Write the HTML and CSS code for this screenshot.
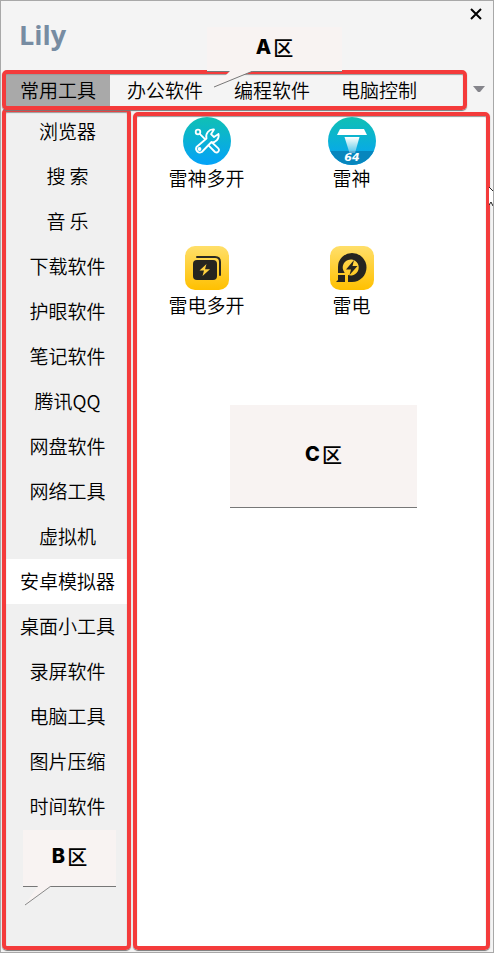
FILE: index.html
```
<!DOCTYPE html>
<html lang="zh-CN">
<head>
    <meta charset="UTF-8">
    <meta name="viewport" content="width=device-width, initial-scale=1.0">
    <title>Lily</title>
    <link rel="stylesheet" href="styles.css">
</head>
<body>
    <div class="window">
        <header class="titlebar">
            <h1>Lily</h1>
            <button class="close" aria-label="关闭">
                <svg width="12" height="12" viewBox="0 0 12 12"><path d="M1 1L11 11M11 1L1 11" stroke="#000" stroke-width="2"/></svg>
            </button>
        </header>

        <div class="tabbar">
            <nav class="tabs frame">
                <button class="tab active">常用工具</button>
                <button class="tab">办公软件</button>
                <button class="tab">编程软件</button>
                <button class="tab">电脑控制</button>
            </nav>
            <button class="more" aria-label="更多">
                <svg width="12" height="8" viewBox="0 0 12 8"><path d="M0 1H12L7 7H5Z" fill="#85858b"/></svg>
            </button>
            <div class="callout callout-a">
                <span>A</span>区
                <svg class="tail" width="46" height="17" viewBox="0 0 46 17"><path d="M23 0L7 16L46 0Z" fill="#f8f3f2"/><path d="M7 16L46 0" stroke="#777" fill="none"/></svg>
            </div>
        </div>

        <div class="content">
            <aside class="sidebar frame">
                <button class="item">浏览器</button>
                <button class="item">搜 索</button>
                <button class="item">音 乐</button>
                <button class="item">下载软件</button>
                <button class="item">护眼软件</button>
                <button class="item">笔记软件</button>
                <button class="item">腾讯QQ</button>
                <button class="item">网盘软件</button>
                <button class="item">网络工具</button>
                <button class="item">虚拟机</button>
                <button class="item active">安卓模拟器</button>
                <button class="item">桌面小工具</button>
                <button class="item">录屏软件</button>
                <button class="item">电脑工具</button>
                <button class="item">图片压缩</button>
                <button class="item">时间软件</button>
                <div class="callout callout-b">
                    <span>B</span>区
                    <svg class="tail" width="30" height="20" viewBox="0 0 30 20"><path d="M15 0L2 19L28 0Z" fill="#f8f3f2"/><path d="M2 19L28 0" stroke="#888" fill="none"/></svg>
                </div>
            </aside>

            <main class="apps frame">
                <div class="grid">
                    <button class="app">
                        <svg width="48" height="48" viewBox="0 0 48 48">
                            <defs>
                                <linearGradient id="blue" x1="0" y1="0" x2="0" y2="1"><stop offset="0" stop-color="#10c0b4"/><stop offset="1" stop-color="#04a2f8"/></linearGradient>
                            </defs>
                            <circle cx="24" cy="24" r="24" fill="url(#blue)"/>
                            <g fill="none" stroke="#fff" stroke-width="1.8" stroke-linejoin="round" stroke-linecap="round">
                                <path d="M31 12.500A7 7 0 0 0 23.500 21.500L13.500 30A3.800 3.800 0 0 0 18.800 35L28 25.500A7 7 0 0 0 35.500 17L31 20L28 17.200Z"/>
                                <path d="M17 17.200L22 22.200M25.500 28.300L32 35A2.500 2.500 0 0 0 35.300 31.300L28.500 25"/>
                                <circle cx="15" cy="15" r="2.300"/>
                                <circle cx="16.500" cy="32" r="1"/>
                            </g>
                        </svg>
                        雷神多开
                    </button>
                    <button class="app">
                        <svg width="48" height="48" viewBox="0 0 48 48">
                            <defs>
                                <clipPath id="disc"><circle cx="24" cy="24" r="24"/></clipPath>
                                <linearGradient id="beam" x1="0" y1="0" x2="0" y2="1"><stop offset="0" stop-color="#fff"/><stop offset="1" stop-color="#fff" stop-opacity="0.300"/></linearGradient>
                            </defs>
                            <circle cx="24" cy="24" r="24" fill="url(#blue)"/>
                            <rect y="34" width="48" height="14" fill="#0786bd" clip-path="url(#disc)"/>
                            <path d="M12 12H36L39 18H9Z" fill="#fff"/>
                            <path d="M16.500 20H31.500L27 36H21.500Z" fill="url(#beam)"/>
                            <text x="24" y="44" class="badge">64</text>
                        </svg>
                        雷神
                    </button>
                    <button class="app">
                        <svg width="48" height="48" viewBox="0 0 48 48">
                            <defs>
                                <linearGradient id="gold" x1="0" y1="0" x2="0" y2="1"><stop offset="0" stop-color="#ffdf6a"/><stop offset="1" stop-color="#ffc000"/></linearGradient>
                            </defs>
                            <rect x="2" y="2" width="44" height="44" rx="10" fill="url(#gold)"/>
                            <path d="M14 13H32Q37 13 37 18V31" fill="none" stroke="#292823" stroke-width="2" stroke-linecap="round"/>
                            <rect x="10" y="16" width="24" height="20" rx="4" fill="#262520"/>
                            <path d="M23.500 20L16.500 26.500H21L19.500 32L27 25.200H22Z" fill="#ffd140"/>
                        </svg>
                        雷电多开
                    </button>
                    <button class="app">
                        <svg width="48" height="48" viewBox="0 0 48 48">
                            <rect x="2" y="2" width="44" height="44" rx="10" fill="url(#gold)"/>
                            <path d="M10 29V23A14 14 0 0 1 24 9A14.500 14.500 0 0 1 24 38H20V31A8 8 0 1 0 16.500 28.500V29Z" fill="#262520"/>
                            <path d="M10 31H17V38H8L10 36Z" fill="#262520"/>
                            <path d="M26 16L18 25.500H23L21.500 31L29.500 22H24.500Z" fill="#262520"/>
                        </svg>
                        雷电
                    </button>
                </div>
                <div class="callout callout-c"><span>C</span>区</div>
            </main>
            <svg class="cursor" width="4" height="22" viewBox="0 0 4 22"><path d="M0 1L4 5V18L2 16L0 19Z" fill="#fff"/><path d="M0 1L4 5M0 19L2 16L4 20" stroke="#222" fill="none"/></svg>
        </div>
    </div>
</body>
</html>
```

FILE: styles.css
```
* {
    box-sizing: border-box;
}
body {
    margin: 0;
    font-family: "Noto Sans CJK SC", sans-serif;
    font-size: 19px;
    color: #000;
}
button {
    font: inherit;
    font-weight: 350;
    line-height: 28px;
    color: inherit;
    background: none;
    border: 0;
    padding: 0;
    white-space: nowrap;
    cursor: pointer;
}
svg {
    display: block;
}
.window {
    display: flex;
    flex-direction: column;
    min-height: 100vh;
    background: #f4f4f4;
    border: 1px solid #a8a8a8;
}
.titlebar {
    display: flex;
    justify-content: space-between;
    align-items: flex-start;
    height: 69px;
    padding: 7px 11px 0 18px;
}
.titlebar h1 {
    margin: 7px 0 0;
    font: bold 27px/40px "Open Sans", sans-serif;
    color: #778ca2;
}

/* red outline round each area */
.frame {
    position: relative;
}
.frame::after {
    content: "";
    position: absolute;
    inset: 0;
    border: 4px solid #f43b3b;
    border-radius: 5px;
    box-shadow: 0 1px 1px #777, inset 0 1px 1px #999;
    pointer-events: none;
}

.tabbar {
    position: relative;
    display: flex;
    align-items: center;
    height: 38px;
    padding-left: 1px;
}
.tabs {
    display: flex;
    gap: 3px;
    width: 465px;
    height: 40px;
    padding: 4px;
    align-self: flex-start;
    z-index: 1;
}
.tab {
    padding: 0 14px 1px;
}
.tab.active {
    background: #a9a9a9;
}
.more {
    margin-left: 6px;
}

.content {
    position: relative;
    display: flex;
    flex: 1;
    gap: 2px;
    padding: 0 3px 2px 1px;
}
.sidebar {
    flex: 0 0 129px;
    padding: 1px 3px 0;
    background: #f0f0f0;
    border-radius: 5px;
}
.sidebar .item {
    display: block;
    width: 100%;
    height: 45px;
    padding: 0 0 2px 2px;
}
.sidebar .item.active {
    background: #fff;
}
.apps {
    flex: 1;
    margin-top: 4px;
    padding: 5px 0 0 1px;
    background: #fff;
    border-radius: 5px;
}
.grid {
    display: grid;
    grid-template-columns: 145px 145px;
    grid-auto-rows: 127px;
}
.app {
    display: flex;
    flex-direction: column;
    align-items: center;
}
.app svg {
    margin-bottom: -1px;
}
.badge {
    font: italic bold 11px "DejaVu Sans", sans-serif;
    fill: #fff;
    text-anchor: middle;
}

.callout {
    display: flex;
    align-items: center;
    justify-content: center;
    gap: 2px;
    padding-bottom: 4px;
    font-size: 20px;
    font-weight: 500;
    background: #f8f3f2;
    border-bottom: 1px solid #777;
}
.callout span {
    font-family: Inter, sans-serif;
    font-weight: 800;
}
.callout .tail {
    position: absolute;
    top: 100%;
}
.callout-a {
    position: absolute;
    z-index: 2;
    left: 206px;
    bottom: 36px;
    width: 135px;
    height: 45px;
}
.callout-a .tail {
    left: 0;
}
.callout-b {
    position: relative;
    height: 57px;
    margin: 1px 12px 0 18px;
}
.callout-b .tail {
    left: 0;
}
.callout-c {
    width: 187px;
    height: 103px;
    margin: 34px auto 0 96px;
}
.cursor {
    position: absolute;
    right: 0;
    top: 78px;
}
```
